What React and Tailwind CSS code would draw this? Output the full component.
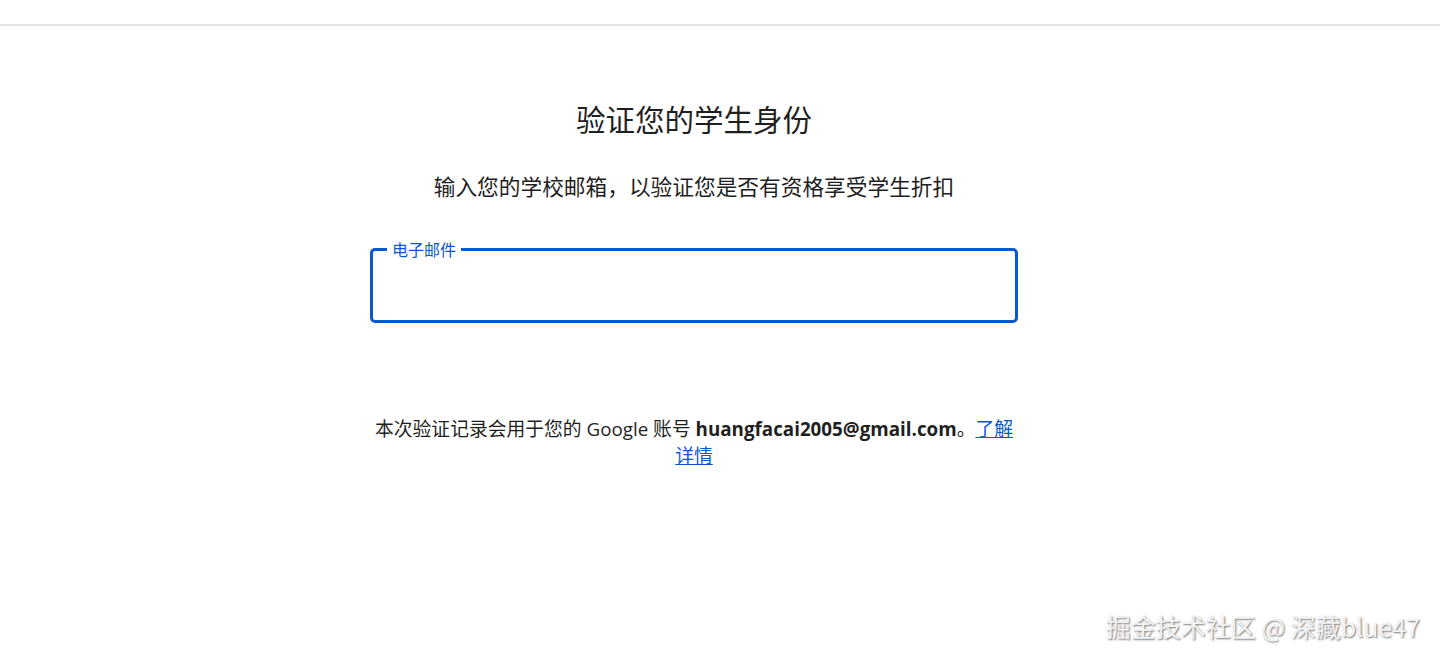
export default function App() {
  const cjk = { fontFamily: '"Open Sans", "Noto Sans CJK SC", sans-serif' }

  return (
    <div className="relative min-h-[662px] bg-white text-[#1f1f1f]" style={cjk}>
      {/* top bar */}
      <div className="h-[26px] border-b-2 border-[#e3e3e3]" />

      <div className="pr-[52px]">
        <main className="mx-auto flex w-[648px] flex-col items-center">
          <h1 className="mt-[74px] text-[29.5px] leading-[36px] font-normal text-[#1f1f1f]"
            style={{ fontFamily: '"Noto Sans CJK SC", sans-serif' }}>
            验证您的学生身份
          </h1>
          <p className="mt-[36px] text-[21.7px] leading-[28px] text-[#1f1f1f]"
            style={{ fontFamily: '"Noto Sans CJK SC", sans-serif' }}>
            输入您的学校邮箱，以验证您是否有资格享受学生折扣
          </p>

          {/* email field */}
          <fieldset className="mt-[41px] h-[82px] w-full rounded-[5px] border-[3px] border-[#0b57d0] pr-[11px] pl-[14px]">
            <legend className="px-[5px] text-[16px] leading-[16px] text-[#0b57d0]"
              style={{ fontFamily: '"Noto Sans CJK SC", sans-serif' }}>电子邮件</legend>
            <input className="h-[50px] w-full bg-transparent text-[18px] outline-none" type="email" />
          </fieldset>

          <p className="mt-[93px] text-center text-[18.8px] leading-[27px] text-[#1f1f1f]">
            本次验证记录会用于您的 Google 账号 <span className="font-bold">huangfacai2005@gmail.com</span>。
            <a href="#" className="text-[#0b57d0] underline">了解详情</a>
          </p>
        </main>
      </div>

      {/* watermark */}
      <div className="absolute right-[20px] bottom-[20px] text-[25px] leading-[32px] text-[#f2f2f2] [text-shadow:1px_1px_2px_rgba(0,0,0,0.55)]"
        style={{ fontFamily: '"Noto Sans CJK SC", "Noto Sans", sans-serif' }}>
        掘金技术社区 @ 深藏blue47
      </div>
    </div>
  )
}
